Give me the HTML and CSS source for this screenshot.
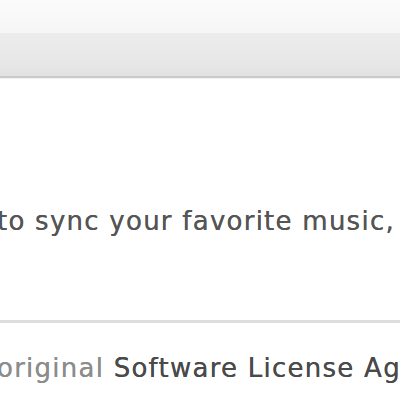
FILE: index.html
```html
<!DOCTYPE html>
<html>
<head>
<meta charset="utf-8">
<link rel="stylesheet" href="styles.css">
</head>
<body>
<div class="page">
  <div class="titlebar"></div>
  <div class="toolbar"></div>
  <div class="content">
    <p class="line intro">to sync your favorite music,</p>
    <hr class="rule">
    <p class="line license"><span class="muted">original</span> Software License Ag</p>
  </div>
</div>
</body>
</html>
```
FILE: styles.css
```css
html, body {
  margin: 0;
  padding: 0;
  background: #ffffff;
}
.page {
  width: 400px;
  height: 400px;
  overflow: hidden;
  font-family: "DejaVu Sans", Verdana, sans-serif;
}
.titlebar {
  height: 33px;
  background: linear-gradient(#fbfbfb, #f6f6f6);
}
.toolbar {
  height: 43px;
  background: linear-gradient(#ececec, #e7e7e7 70%, #e2e2e2);
  border-bottom: 2px solid #c9c9c9;
  box-shadow: 0 1px 1px rgba(0,0,0,0.05);
}
.content {
  display: flex;
  flex-direction: column;
}
.line {
  margin: 0;
  white-space: nowrap;
  font-size: 26px;
  line-height: 30px;
  letter-spacing: 1.25px;
  margin-left: -3px;
  text-shadow: 0 0 0.6px currentColor;
}
.intro {
  color: #555555;
  margin-top: 128px;
}
.rule {
  border: 0;
  height: 3px;
  background: #dedede;
  margin: 84px 0 0 0;
}
.license {
  color: #4a4a4a;
  margin-top: 30px;
}
.muted {
  color: #8c8c8c;
}
```
